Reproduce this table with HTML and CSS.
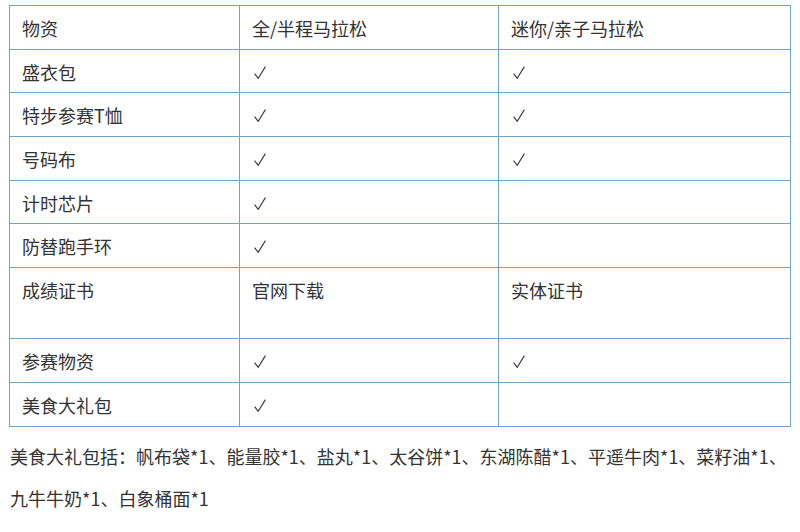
FILE: index.html
```html
<!DOCTYPE html>
<html lang="zh-CN">
<head>
<meta charset="utf-8">
<link rel="stylesheet" href="styles.css">
</head>
<body>
<div class="page">
<table class="kit">
  <colgroup>
    <col class="c1"><col class="c2"><col class="c3">
  </colgroup>
  <tr><td>物资</td><td>全/半程马拉松</td><td>迷你/亲子马拉松</td></tr>
  <tr><td>盛衣包</td><td><svg class="ck" viewBox="0 0 12 13"><path d="M0.6 7.6 L4.2 12.4 L11.4 0.6"/></svg></td><td><svg class="ck" viewBox="0 0 12 13"><path d="M0.6 7.6 L4.2 12.4 L11.4 0.6"/></svg></td></tr>
  <tr><td>特步参赛T恤</td><td><svg class="ck" viewBox="0 0 12 13"><path d="M0.6 7.6 L4.2 12.4 L11.4 0.6"/></svg></td><td><svg class="ck" viewBox="0 0 12 13"><path d="M0.6 7.6 L4.2 12.4 L11.4 0.6"/></svg></td></tr>
  <tr><td>号码布</td><td><svg class="ck" viewBox="0 0 12 13"><path d="M0.6 7.6 L4.2 12.4 L11.4 0.6"/></svg></td><td><svg class="ck" viewBox="0 0 12 13"><path d="M0.6 7.6 L4.2 12.4 L11.4 0.6"/></svg></td></tr>
  <tr><td>计时芯片</td><td><svg class="ck" viewBox="0 0 12 13"><path d="M0.6 7.6 L4.2 12.4 L11.4 0.6"/></svg></td><td></td></tr>
  <tr><td>防替跑手环</td><td><svg class="ck" viewBox="0 0 12 13"><path d="M0.6 7.6 L4.2 12.4 L11.4 0.6"/></svg></td><td></td></tr>
  <tr class="tall"><td>成绩证书</td><td>官网下载</td><td>实体证书</td></tr>
  <tr><td>参赛物资</td><td><svg class="ck" viewBox="0 0 12 13"><path d="M0.6 7.6 L4.2 12.4 L11.4 0.6"/></svg></td><td><svg class="ck" viewBox="0 0 12 13"><path d="M0.6 7.6 L4.2 12.4 L11.4 0.6"/></svg></td></tr>
  <tr><td>美食大礼包</td><td><svg class="ck" viewBox="0 0 12 13"><path d="M0.6 7.6 L4.2 12.4 L11.4 0.6"/></svg></td><td></td></tr>
</table>
<p class="note">美食大礼包括：帆布袋*1、能量胶*1、盐丸*1、太谷饼*1、东湖陈醋*1、平遥牛肉*1、菜籽油*1、<br>九牛牛奶*1、白象桶面*1</p>
</div>
</body>
</html>
```

FILE: styles.css
```css
html, body {
  margin: 0;
  padding: 0;
  background: #ffffff;
}
body {
  font-family: "Noto Sans CJK SC", "Noto Sans", sans-serif;
  color: #333333;
  font-size: 18px;
}
.page {
  padding: 5px 10px 0 9px;
}
.kit {
  border-collapse: collapse;
  width: 781px;
  table-layout: fixed;
}
.c1 { width: 230px; }
.c2 { width: 259px; }
.c3 { width: 292px; }
.kit tr {
  height: 43.7px;
}
.kit tr.tall {
  height: 71px;
}
.kit td {
  border: 1px solid #6fa6c4;
  padding: 12px 12px 0 12px;
  vertical-align: top;
  line-height: 20px;
  white-space: nowrap;
}
.ck {
  display: block;
  width: 12px;
  height: 13px;
  margin: 4px 0 0 2px;
  fill: none;
  stroke: #3a3a3a;
  stroke-width: 1.1;
}
.note {
  margin: 8px 0 0 1px;
  line-height: 42px;
  font-size: 18px;
  white-space: nowrap;
}
```
